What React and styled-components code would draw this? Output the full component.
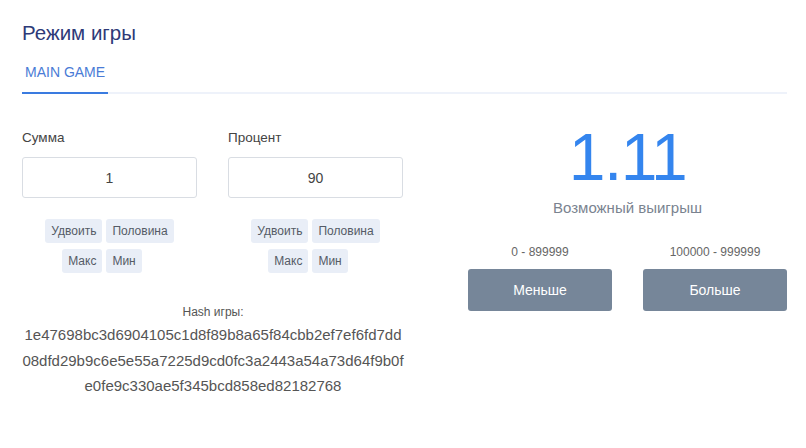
import React, { useState } from "react";
import styled, { createGlobalStyle } from "styled-components";

const GlobalStyle = createGlobalStyle`
	body {
		margin: 0;
		background: #fff;
		font-family: "Liberation Sans", Arial, sans-serif;
	}
`;

const Page = styled.div`
	width: 806px;
	height: 448px;
	box-sizing: border-box;
	padding: 22px 19px 0 22px;
`;

const Title = styled.h1`
	margin: 0;
	font-size: 20.5px;
	font-weight: normal;
	color: #2e3a78;
	line-height: 22px;
`;

const Tabs = styled.div`
	display: flex;
	margin-top: 20px;
	border-bottom: 2px solid #eef2fa;
`;

const Tab = styled.div`
	padding: 0 3px 11px 3px;
	margin-bottom: -2px;
	font-size: 14px;
	line-height: 17px;
	color: #4a7bd6;
	border-bottom: 2px solid ${props => (props.active ? "#3a7be0" : "transparent")};
`;

const Body = styled.div`
	display: flex;
	justify-content: space-between;
	margin-top: 36px;
`;

const LeftSide = styled.div`
	width: 382px;
`;

const Fields = styled.div`
	display: flex;
	gap: 31px;
`;

const Field = styled.div`
	width: 175px;
`;

const Label = styled.div`
	font-size: 13.5px;
	color: #444;
	line-height: 16px;
`;

const Input = styled.input`
	display: block;
	box-sizing: border-box;
	width: 100%;
	height: 41px;
	margin-top: 11px;
	border: 1px solid #d9dde3;
	border-radius: 3px;
	text-align: center;
	font-family: inherit;
	font-size: 14px;
	color: #444;
	outline: none;
`;

const Chips = styled.div`
	display: grid;
	grid-template-columns: auto auto;
	justify-content: center;
	gap: 6px 4px;
	margin-top: 21px;
`;

const Chip = styled.button`
	justify-self: ${props => (props.right ? "start" : "end")};
	border: none;
	border-radius: 3px;
	background: #e9eef7;
	color: #555b66;
	font-family: inherit;
	font-size: 12px;
	height: 24px;
	padding: 0 6px;
	cursor: pointer;
`;

const Hash = styled.div`
	margin-top: 32px;
	text-align: center;
	color: #555;
`;

const HashTitle = styled.div`
	font-size: 12px;
	line-height: 14px;
`;

const HashValue = styled.div`
	margin-top: 3px;
	font-size: 15px;
	line-height: 25.5px;
`;

const RightSide = styled.div`
	width: 319px;
	display: flex;
	flex-direction: column;
	align-items: center;
`;

const Coef = styled.div`
	margin-top: -13px;
	font-size: 66px;
	line-height: 80px;
	color: #3485ee;
	letter-spacing: -1.5px;
`;

const CoefCaption = styled.div`
	margin-top: 2px;
	font-size: 15px;
	line-height: 18px;
	color: #7a8390;
`;

const Bets = styled.div`
	display: flex;
	gap: 31px;
	margin-top: 28px;
	width: 100%;
`;

const Bet = styled.div`
	flex: 1;
	display: flex;
	flex-direction: column;
	align-items: center;
`;

const Range = styled.div`
	font-size: 12px;
	color: #666;
	line-height: 14px;
`;

const BetButton = styled.button`
	width: 100%;
	height: 42px;
	margin-top: 10px;
	border: none;
	border-radius: 3px;
	background: #768699;
	color: #fff;
	font-family: inherit;
	font-size: 14px;
	cursor: pointer;
`;

function QuickButtons() {
	return (
		<Chips>
			<Chip>Удвоить</Chip>
			<Chip right>Половина</Chip>
			<Chip>Макс</Chip>
			<Chip right>Мин</Chip>
		</Chips>
	);
}

function App() {
	const [amount, setAmount] = useState("1");
	const [percent, setPercent] = useState("90");

	return (
		<>
			<GlobalStyle />
			<Page>
				<Title>Режим игры</Title>
				<Tabs>
					<Tab active>MAIN GAME</Tab>
				</Tabs>
				<Body>
					<LeftSide>
						<Fields>
							<Field>
								<Label>Сумма</Label>
								<Input value={amount} onChange={e => setAmount(e.target.value)} />
								<QuickButtons />
							</Field>
							<Field>
								<Label>Процент</Label>
								<Input value={percent} onChange={e => setPercent(e.target.value)} />
								<QuickButtons />
							</Field>
						</Fields>
						<Hash>
							<HashTitle>Hash игры:</HashTitle>
							<HashValue>
								1e47698bc3d6904105c1d8f89b8a65f84cbb2ef7ef6fd7dd
								<br />
								08dfd29b9c6e5e55a7225d9cd0fc3a2443a54a73d64f9b0f
								<br />
								e0fe9c330ae5f345bcd858ed82182768
							</HashValue>
						</Hash>
					</LeftSide>
					<RightSide>
						<Coef>1.11</Coef>
						<CoefCaption>Возможный выигрыш</CoefCaption>
						<Bets>
							<Bet>
								<Range>0 - 899999</Range>
								<BetButton>Меньше</BetButton>
							</Bet>
							<Bet>
								<Range>100000 - 999999</Range>
								<BetButton>Больше</BetButton>
							</Bet>
						</Bets>
					</RightSide>
				</Body>
			</Page>
		</>
	);
}

export default App;
